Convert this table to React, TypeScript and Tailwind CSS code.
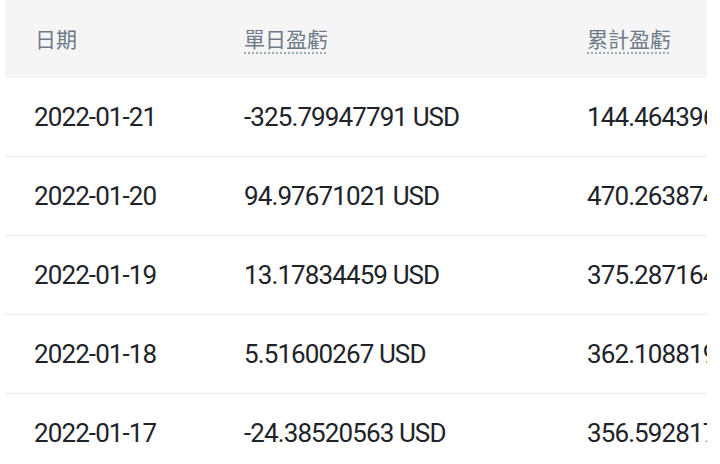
const rows = [
  { date: "2022-01-21", daily: "-325.79947791 USD", total: "144.46439677 USD" },
  { date: "2022-01-20", daily: "94.97671021 USD", total: "470.26387468 USD" },
  { date: "2022-01-19", daily: "13.17834459 USD", total: "375.28716447 USD" },
  { date: "2022-01-18", daily: "5.51600267 USD", total: "362.10881988 USD" },
  { date: "2022-01-17", daily: "-24.38520563 USD", total: "356.59281729 USD" },
];

const cjk = "font-['Noto_Sans_CJK_TC',sans-serif]";
const num = "font-['Roboto',sans-serif] text-[26px] tracking-[-0.9px] text-[#1e2329]";

export default function App() {
  return (
    <div className="h-[464px] w-[720px] overflow-hidden bg-white">
      <div className="ml-[5px] w-[702px] overflow-hidden">
        <div className="flex h-[78px] items-center bg-[#f5f5f5] text-[21px] text-[#707a8a]">
          <div className={`w-[239px] shrink-0 pl-[30px] ${cjk}`}>日期</div>
          <div className={`w-[343px] shrink-0 ${cjk}`}>
            <span className="underline decoration-dotted decoration-[#a0a8b4] underline-offset-[5px]">
              單日盈虧
            </span>
          </div>
          <div className={`shrink-0 whitespace-nowrap ${cjk}`}>
            <span className="underline decoration-dotted decoration-[#a0a8b4] underline-offset-[5px]">
              累計盈虧
            </span>
          </div>
        </div>
        {rows.map((r) => (
          <div
            key={r.date}
            className="flex h-[79px] items-center border-b border-[#eaecef] whitespace-nowrap"
          >
            <div className={`w-[239px] shrink-0 pl-[29px] ${num}`}>{r.date}</div>
            <div className={`w-[343px] shrink-0 ${num}`}>{r.daily}</div>
            <div className={`shrink-0 ${num}`}>{r.total}</div>
          </div>
        ))}
      </div>
    </div>
  );
}
